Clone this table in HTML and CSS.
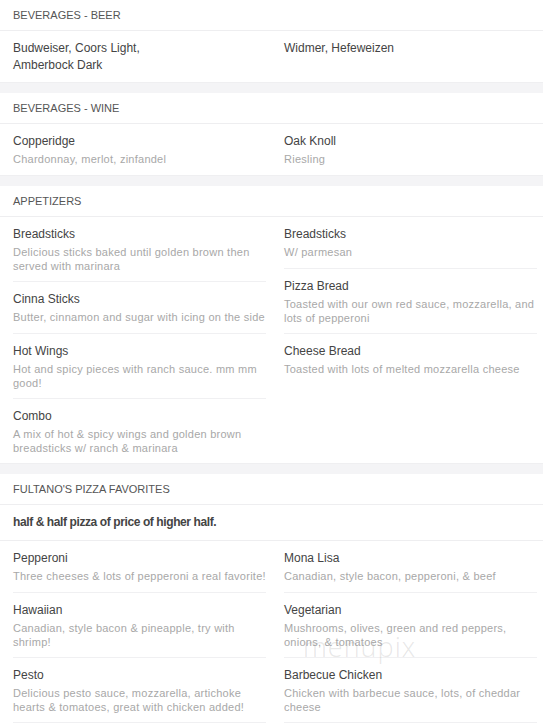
FILE: index.html
```html
<!DOCTYPE html>
<html>
<head>
<meta charset="utf-8">
<link rel="stylesheet" href="styles.css">
</head>
<body>
<div class="menu">
  <section class="section">
    <div class="sec-head">BEVERAGES - BEER</div>
    <div class="cols">
      <div class="col">
        <div class="item"><div class="title">Budweiser, Coors Light,<br>Amberbock Dark</div></div>
      </div>
      <div class="col">
        <div class="item"><div class="title">Widmer, Hefeweizen</div></div>
      </div>
    </div>
  </section>
  <div class="band"></div>
  <section class="section">
    <div class="sec-head">BEVERAGES - WINE</div>
    <div class="cols">
      <div class="col">
        <div class="item"><div class="title">Copperidge</div><div class="desc">Chardonnay, merlot, zinfandel</div></div>
      </div>
      <div class="col">
        <div class="item"><div class="title">Oak Knoll</div><div class="desc">Riesling</div></div>
      </div>
    </div>
  </section>
  <div class="band"></div>
  <section class="section">
    <div class="sec-head">APPETIZERS</div>
    <div class="cols">
      <div class="col">
        <div class="item"><div class="title">Breadsticks</div><div class="desc">Delicious sticks baked until golden brown then served with marinara</div></div>
        <div class="item"><div class="title">Cinna Sticks</div><div class="desc">Butter, cinnamon and sugar with icing on the side</div></div>
        <div class="item"><div class="title">Hot Wings</div><div class="desc">Hot and spicy pieces with ranch sauce. mm mm good!</div></div>
        <div class="item"><div class="title">Combo</div><div class="desc">A mix of hot &amp; spicy wings and golden brown breadsticks w/ ranch &amp; marinara</div></div>
      </div>
      <div class="col">
        <div class="item"><div class="title">Breadsticks</div><div class="desc">W/ parmesan</div></div>
        <div class="item"><div class="title">Pizza Bread</div><div class="desc">Toasted with our own red sauce, mozzarella, and lots of pepperoni</div></div>
        <div class="item"><div class="title">Cheese Bread</div><div class="desc">Toasted with lots of melted mozzarella cheese</div></div>
      </div>
    </div>
  </section>
  <div class="band"></div>
  <section class="section">
    <div class="sec-head">FULTANO'S PIZZA FAVORITES</div>
    <div class="note">half &amp; half pizza of price of higher half.</div>
    <div class="cols">
      <div class="col">
        <div class="item"><div class="title">Pepperoni</div><div class="desc">Three cheeses &amp; lots of pepperoni a real favorite!</div></div>
        <div class="item"><div class="title">Hawaiian</div><div class="desc">Canadian, style bacon &amp; pineapple, try with shrimp!</div></div>
        <div class="item divided"><div class="title">Pesto</div><div class="desc">Delicious pesto sauce, mozzarella, artichoke hearts &amp; tomatoes, great with chicken added!</div></div>
      </div>
      <div class="col">
        <div class="item"><div class="title">Mona Lisa</div><div class="desc">Canadian, style bacon, pepperoni, &amp; beef</div></div>
        <div class="item"><div class="title">Vegetarian</div><div class="desc">Mushrooms, olives, green and red peppers, onions, &amp; tomatoes</div></div>
        <div class="item divided"><div class="title">Barbecue Chicken</div><div class="desc">Chicken with barbecue sauce, lots, of cheddar cheese</div></div>
      </div>
    </div>
  </section>
  <div class="watermark">menupix</div>
</div>
</body>
</html>
```
FILE: styles.css
```css
html, body {
  margin: 0;
  padding: 0;
  background: #ffffff;
}
body {
  font-family: "Liberation Sans", Arial, sans-serif;
  width: 543px;
  overflow: hidden;
}
.menu {
  position: relative;
}
.sec-head {
  height: 30px;
  line-height: 30px;
  padding: 0 13px;
  font-size: 11px;
  letter-spacing: 0;
  color: #555;
  border-bottom: 1px solid #eeeef0;
}
.band {
  height: 11px;
  background: #f4f4f6;
  border-top: 1px solid #efeff1;
  box-sizing: border-box;
}
.note {
  padding: 9px 13px 10px;
  line-height: 16px;
  font-size: 12px;
  font-weight: bold;
  letter-spacing: -0.4px;
  color: #444;
  border-bottom: 1px solid #eeeef0;
}
.cols {
  display: grid;
  grid-template-columns: 253px 253px;
  column-gap: 18px;
  padding: 0 6px 0 13px;
}
.col {
  display: flex;
  flex-direction: column;
}
.item {
  padding: 9px 0 8px;
  min-height: 34px;
  border-bottom: 1px solid #f0f0f2;
}
.item:last-child {
  border-bottom: none;
}
.item.divided {
  border-bottom: 1px solid #f0f0f2;
}
.title {
  font-size: 12px;
  line-height: 17px;
  color: #444;
}
.desc {
  margin-top: 2px;
  margin-right: -6px;
  font-size: 11px;
  line-height: 14px;
  letter-spacing: 0.25px;
  color: #a8a8a8;
}
.watermark {
  position: absolute;
  left: 303px;
  top: 628px;
  font-family: "Open Sans", sans-serif;
  font-weight: 300;
  font-size: 27px;
  letter-spacing: 1px;
  color: rgba(120, 120, 120, 0.18);
  pointer-events: none;
}
```
